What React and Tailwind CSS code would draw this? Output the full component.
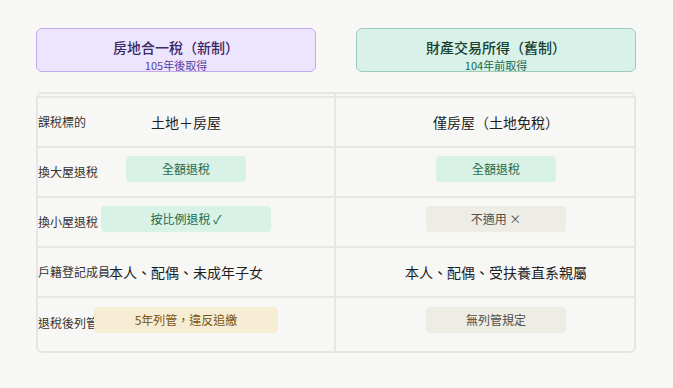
const font = { fontFamily: '"Noto Sans CJK TC", "Noto Sans", sans-serif' };

const rows = [
  {
    label: "課稅標的",
    left: { text: "土地＋房屋" },
    right: { text: "僅房屋（土地免稅）" },
  },
  {
    label: "換大屋退稅",
    left: { badge: "green", text: "全額退稅", w: "w-[120px]" },
    right: { badge: "green", text: "全額退稅", w: "w-[120px]" },
  },
  {
    label: "換小屋退稅",
    left: { badge: "green", text: "按比例退稅 ✓", w: "w-[170px]" },
    right: { badge: "gray", text: "不適用 ×", w: "w-[140px]" },
  },
  {
    label: "戶籍登記成員",
    left: { text: "本人、配偶、未成年子女" },
    right: { text: "本人、配偶、受扶養直系親屬" },
  },
  {
    label: "退稅後列管",
    left: { badge: "amber", text: "5年列管，違反追繳", w: "w-[184px]" },
    right: { badge: "gray", text: "無列管規定", w: "w-[140px]" },
  },
];

const badgeTone = {
  green: "bg-[#d9f2e8] text-[#1d6a4c]",
  gray: "bg-[#edece5] text-[#4f4f4c]",
  amber: "bg-[#f7edd4] text-[#7a5412]",
};

function Value({ v }) {
  if (v.badge) {
    return (
      <div
        className={`${v.w} ${badgeTone[v.badge]} mb-[6px] flex h-[26px] items-center justify-center rounded-[4px] text-[12px]`}
      >
        {v.text}
      </div>
    );
  }
  return <div className="whitespace-nowrap text-[14px] text-[#1f1f1f]">{v.text}</div>;
}

export default function App() {
  return (
    <div className="min-h-screen bg-[#f7f7f5] px-9 pt-7" style={font}>
      {/* Column headers */}
      <div className="grid w-[600px] grid-cols-2 gap-10">
        <div className="flex h-[44px] flex-col items-center rounded-md border border-[#c2aaee] bg-[#ede5fd] pt-[8px]">
          <div className="text-[14px] font-medium leading-[20px] text-[#3a2868]">房地合一稅（新制）</div>
          <div className="text-[11px] leading-[16px] text-[#5a3d9e]">105年後取得</div>
        </div>
        <div className="flex h-[44px] flex-col items-center rounded-md border border-[#9dcbb7] bg-[#d9f2e9] pt-[8px]">
          <div className="text-[14px] font-medium leading-[20px] text-[#163f2e]">財產交易所得（舊制）</div>
          <div className="text-[11px] leading-[16px] text-[#1c664a]">104年前取得</div>
        </div>
      </div>

      {/* Comparison table */}
      <div className="mt-5 w-[600px] rounded-md border-2 border-[#e6e6e3]">
        <div className="grid h-[4px] grid-cols-[298px_1fr] border-b-2 border-[#e6e6e3]">
          <div className="border-r-2 border-[#e6e6e3]" />
          <div />
        </div>

        {rows.map((r, i) => (
          <div
            key={i}
            className={`grid h-[50px] grid-cols-[298px_1fr] ${i < rows.length - 1 ? "border-b-2 border-[#e6e6e3]" : ""}`}
          >
            <div className="grid border-r-2 border-[#e6e6e3]">
              <div className="col-start-1 row-start-1 self-center justify-self-start text-[12px] text-[#333]">
                {r.label}
              </div>
              <div className="col-start-1 row-start-1 flex items-center justify-center">
                <Value v={r.left} />
              </div>
            </div>
            <div className="flex items-center justify-center pl-[22px]">
              <Value v={r.right} />
            </div>
          </div>
        ))}

        <div className="grid h-[3px] grid-cols-[298px_1fr]">
          <div className="border-r-2 border-[#e6e6e3]" />
          <div />
        </div>
      </div>
    </div>
  );
}
